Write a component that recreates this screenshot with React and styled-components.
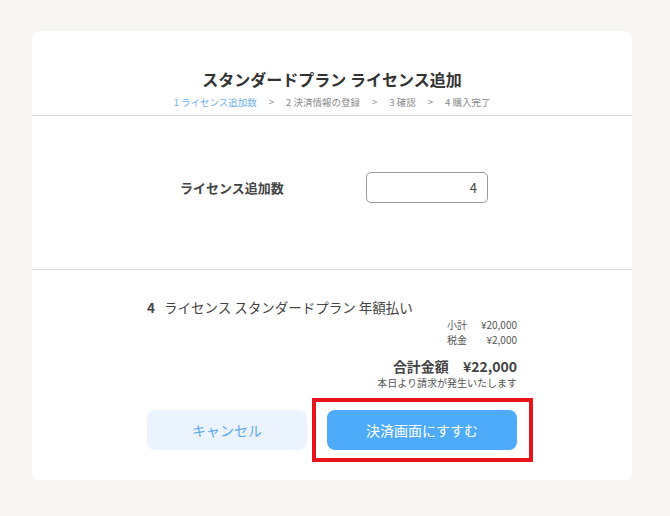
import React from "react";
import styled, { createGlobalStyle } from "styled-components";

const GlobalStyle = createGlobalStyle`
	html, body {
		margin: 0;
		padding: 0;
		background-color: #f7f6f4;
		font-family: "Noto Sans CJK JP", "Noto Sans", sans-serif;
		color: #333;
	}
`;

const Page = styled.div`
	width: 670px;
	height: 516px;
	padding-top: 31px;
	box-sizing: border-box;
`;

const Card = styled.div`
	width: 600px;
	margin-left: 32px;
	background-color: #fff;
	border-radius: 8px;
`;

const Header = styled.div`
	display: flex;
	flex-direction: column;
	align-items: center;
	padding-top: 36px;
	padding-bottom: 6px;
	border-bottom: 1px solid #d6d6d6;
`;

const Title = styled.div`
	font-size: 16px;
	font-weight: bold;
	line-height: 24px;
	color: #333;
`;

const Steps = styled.div`
	display: flex;
	flex-direction: row;
	gap: 12px;
	margin-top: 4px;
	font-size: 9.5px;
	line-height: 14px;
	color: #8a8a8a;
`;

const Step = styled.span`
	color: ${({ active }) => (active ? "#6aaeea" : "#8a8a8a")};
`;

const InputSection = styled.div`
	display: flex;
	flex-direction: row;
	justify-content: center;
	align-items: center;
	padding-top: 56px;
	padding-bottom: 66px;
	padding-left: 4px;
	border-bottom: 1px solid #d6d6d6;
`;

const FieldLabel = styled.div`
	width: 186px;
	font-size: 13px;
	font-weight: bold;
	color: #444;
`;

const NumberInput = styled.div`
	width: 122px;
	height: 31px;
	box-sizing: border-box;
	border: 1px solid #9a9a9a;
	border-radius: 5px;
	display: flex;
	align-items: center;
	justify-content: flex-end;
	padding-right: 10px;
	font-size: 13px;
	color: #444;
`;

const Summary = styled.div`
	width: 370px;
	margin: 0 auto;
	padding-top: 27px;
	padding-bottom: 30px;
	display: flex;
	flex-direction: column;
`;

const PlanLine = styled.div`
	font-size: 13.5px;
	line-height: 20px;
	color: #444;
	span {
		font-weight: bold;
		margin-right: 9px;
	}
`;

const PriceRow = styled.div`
	display: flex;
	flex-direction: row;
	justify-content: flex-end;
	font-size: 10px;
	line-height: 15px;
	color: #555;
`;

const PriceAmount = styled.span`
	width: 50px;
	text-align: right;
`;

const TotalRow = styled.div`
	display: flex;
	flex-direction: row;
	justify-content: flex-end;
	gap: 14px;
	margin-top: 9px;
	font-size: 14px;
	font-weight: bold;
	line-height: 20px;
	color: #444;
`;

const Note = styled.div`
	text-align: right;
	font-size: 10px;
	line-height: 14px;
	color: #555;
`;

const ButtonRow = styled.div`
	display: flex;
	flex-direction: row;
	gap: 20px;
	margin-top: 20px;
`;

const Button = styled.button`
	width: ${({ width }) => width}px;
	height: 40px;
	border: none;
	border-radius: 8px;
	font-family: inherit;
	font-size: 14px;
	background-color: ${({ primary }) => (primary ? "#4eabf9" : "#ebf4fe")};
	color: ${({ primary }) => (primary ? "#fff" : "#5ba9ef")};
`;

const Highlight = styled.div`
	position: relative;
	&::after {
		content: "";
		position: absolute;
		left: -15px;
		top: -12px;
		right: -16px;
		bottom: -12px;
		border: 4px solid #e8141c;
		pointer-events: none;
	}
`;

const App = () => {
	return (
		<Page>
			<GlobalStyle />
			<Card>
				<Header>
					<Title>スタンダードプラン ライセンス追加</Title>
					<Steps>
						<Step active>1 ライセンス追加数</Step>
						<Step>&gt;</Step>
						<Step>2 決済情報の登録</Step>
						<Step>&gt;</Step>
						<Step>3 確認</Step>
						<Step>&gt;</Step>
						<Step>4 購入完了</Step>
					</Steps>
				</Header>
				<InputSection>
					<FieldLabel>ライセンス追加数</FieldLabel>
					<NumberInput>4</NumberInput>
				</InputSection>
				<Summary>
					<PlanLine>
						<span>4</span>ライセンス スタンダードプラン 年額払い
					</PlanLine>
					<PriceRow>
						<span>小計</span>
						<PriceAmount>¥20,000</PriceAmount>
					</PriceRow>
					<PriceRow>
						<span>税金</span>
						<PriceAmount>¥2,000</PriceAmount>
					</PriceRow>
					<TotalRow>
						<span>合計金額</span>
						<span>¥22,000</span>
					</TotalRow>
					<Note>本日より請求が発生いたします</Note>
					<ButtonRow>
						<Button width={160}>キャンセル</Button>
						<Highlight>
							<Button primary width={190}>決済画面にすすむ</Button>
						</Highlight>
					</ButtonRow>
				</Summary>
			</Card>
		</Page>
	);
};

export default App;
